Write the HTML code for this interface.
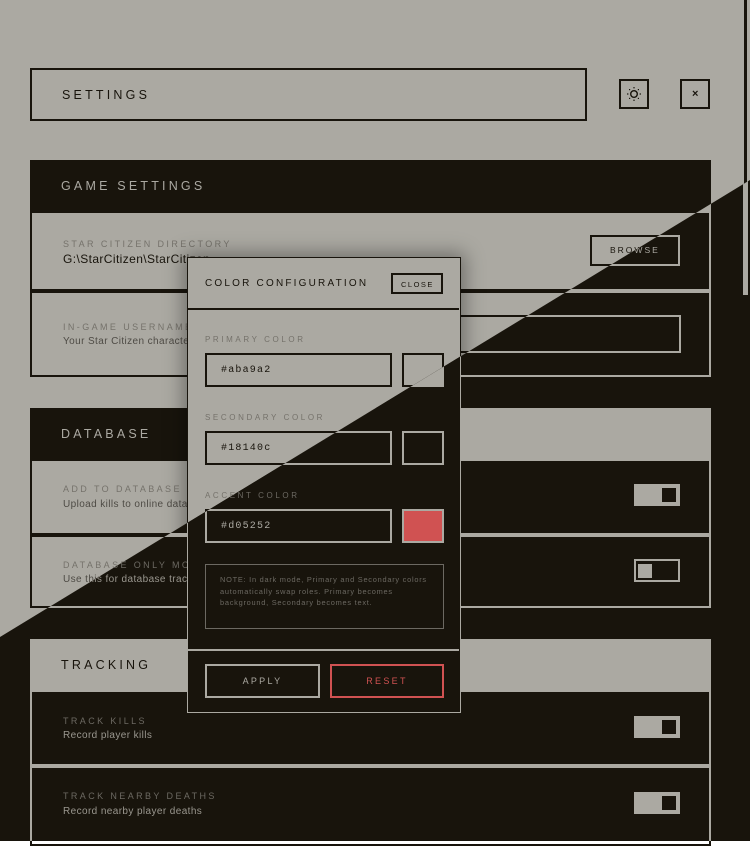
<!DOCTYPE html>
<html><head><meta charset="utf-8"><style>
*{margin:0;padding:0;box-sizing:border-box}
html,body{width:750px;height:841px;overflow:hidden;font-family:"Liberation Sans",Arial,sans-serif}
.layer{position:absolute;left:0;top:0;width:750px;height:841px;background:var(--bg);color:var(--fg)}
.light{--bg:#aba9a2;--fg:#18140c;--mut:#75726b;--desc:#4e4b45}
.dark{--bg:#18140c;--fg:#aba9a2;--mut:#6c6962;--desc:#9a978f;clip-path:polygon(750px 180px,750px 841px,0 841px,0 637px)}
.a{position:absolute}
.box{position:absolute;border:2px solid var(--fg)}
.ttl{font-size:12.5px;letter-spacing:3.2px}
.sh{position:absolute;left:30px;width:681px;height:53px;background:var(--fg);color:var(--bg);padding:19px 0 0 31px}
.row{position:absolute;left:30px;width:681px;border:2px solid var(--fg);border-top:0}
.lab{position:absolute;left:31px;font-size:9px;letter-spacing:2.4px;color:var(--mut)}
.val{position:absolute;left:31px;font-size:12px;letter-spacing:.4px}
.desc{position:absolute;left:31px;font-size:10px;letter-spacing:.4px;color:var(--desc)}
.tog{position:absolute;left:602px;width:46px;height:22px;background:var(--fg);border:1px solid var(--fg)}
.tog i{position:absolute;left:27px;top:3px;width:14px;height:14px;background:var(--bg)}
.toff{position:absolute;left:602px;width:46px;height:23px;border:2px solid var(--fg)}
.toff i{position:absolute;left:2px;top:3px;width:14px;height:14px;background:var(--fg)}
.modal{position:absolute;left:187px;top:257px;width:274px;height:456px;background:var(--bg);border:1.5px solid var(--fg)}
.light .modal{box-shadow:0 0 18px 4px rgba(0,0,0,.35)}
.ml{position:absolute;left:17px;font-size:8px;letter-spacing:2.6px;color:var(--mut)}
.inp{position:absolute;left:17px;width:187px;height:34px;border:2px solid var(--fg);font-family:"Liberation Mono",monospace;font-size:10px;letter-spacing:1.2px;padding:10px 0 0 14px}
.sw{position:absolute;left:214px;width:42px;height:34px;border:2px solid var(--fg)}
.note{position:absolute;left:17px;top:306px;width:239px;height:65px;border:1.5px solid var(--mut);font-size:7.4px;letter-spacing:.75px;line-height:11.5px;color:var(--mut);padding:9px 12px 0 14px}
</style></head><body>

<!-- LIGHT -->
<div class="layer light">
 <div class="a" style="left:744px;top:0;width:3px;height:295px;background:var(--fg)"></div>
 <div class="box" style="left:30px;top:68px;width:557px;height:53px"><div class="a ttl" style="left:30px;top:18px">SETTINGS</div></div>
 <div class="box" style="left:619px;top:79px;width:30px;height:30px">
  <svg class="a" style="left:5px;top:5px" width="16" height="16" viewBox="0 0 16 16"><circle cx="8" cy="8" r="3.3" fill="none" stroke="currentColor" stroke-width="1.4"/><g fill="currentColor"><rect x="7.4" y="1" width="1.2" height="1.4"/><rect x="7.4" y="13.6" width="1.2" height="1.4"/><rect x="1" y="7.4" width="1.4" height="1.2"/><rect x="13.6" y="7.4" width="1.4" height="1.2"/><rect x="3" y="3" width="1.2" height="1.2"/><rect x="11.8" y="3" width="1.2" height="1.2"/><rect x="3" y="11.8" width="1.2" height="1.2"/><rect x="11.8" y="11.8" width="1.2" height="1.2"/></g></svg></div>
 <div class="box" style="left:680px;top:79px;width:30px;height:30px"><div class="a" style="left:10px;top:7px;font-size:11px;font-weight:bold">×</div></div>

 <div class="sh ttl" style="top:160px">GAME SETTINGS</div>
 <div class="row" style="top:213px;height:78px">
  <div class="lab" style="top:26px">STAR CITIZEN DIRECTORY</div>
  <div class="val" style="top:39px">G:\StarCitizen\StarCitizen</div>
  <div class="box" style="left:558px;top:22px;width:90px;height:31px;font-size:8.5px;letter-spacing:2px;padding:8px 0 0 18px">BROWSE</div>
 </div>
 <div class="row" style="top:291px;height:86px;border-top:2px solid var(--fg)">
  <div class="lab" style="top:29px">IN-GAME USERNAME</div>
  <div class="desc" style="top:43px">Your Star Citizen character name</div>
  <div class="box" style="left:363px;top:22px;width:286px;height:38px"></div>
 </div>

 <div class="sh ttl" style="top:408px">DATABASE</div>
 <div class="row" style="top:461px;height:74px">
  <div class="lab" style="top:23px">ADD TO DATABASE</div>
  <div class="desc" style="top:38px">Upload kills to online database</div>
  <div class="tog" style="top:23px"><i></i></div>
 </div>
 <div class="row" style="top:535px;height:73px;border-top:2px solid var(--fg)">
  <div class="lab" style="top:23px">DATABASE ONLY MODE</div>
  <div class="desc" style="top:37px">Use this for database tracking only</div>
  <div class="toff" style="top:22px"><i></i></div>
 </div>

 <div class="sh ttl" style="top:639px">TRACKING</div>
 <div class="row" style="top:692px;height:74px">
  <div class="lab" style="top:24px">TRACK KILLS</div>
  <div class="desc" style="top:38px">Record player kills</div>
  <div class="tog" style="top:24px"><i></i></div>
 </div>
 <div class="row" style="top:766px;height:80px;border-top:2px solid var(--fg)">
  <div class="lab" style="top:23px">TRACK NEARBY DEATHS</div>
  <div class="desc" style="top:38px">Record nearby player deaths</div>
  <div class="tog" style="top:24px"><i></i></div>
 </div>

 <div class="modal">
  <div class="a" style="left:17px;top:20px;font-size:10px;letter-spacing:2.2px">COLOR CONFIGURATION</div>
  <div class="box" style="left:203px;top:15px;width:52px;height:21px;font-size:7.5px;letter-spacing:1.5px;padding:5px 0 0 8px">CLOSE</div>
  <div class="a" style="left:0;top:50px;width:271px;height:1.5px;background:var(--fg)"></div>
  <div class="ml" style="top:77px">PRIMARY COLOR</div>
  <div class="inp" style="top:95px">#aba9a2</div>
  <div class="sw" style="top:95px;background:#aba9a2"></div>
  <div class="ml" style="top:155px">SECONDARY COLOR</div>
  <div class="inp" style="top:173px">#18140c</div>
  <div class="sw" style="top:173px;background:#18140c"></div>
  <div class="ml" style="top:233px">ACCENT COLOR</div>
  <div class="inp" style="top:251px">#d05252</div>
  <div class="sw" style="top:251px;background:#d05252"></div>
  <div class="note">NOTE: In dark mode, Primary and Secondary colors automatically swap roles. Primary becomes background, Secondary becomes text.</div>
  <div class="a" style="left:0;top:391px;width:271px;height:1.5px;background:var(--fg)"></div>
  <div class="box" style="left:17px;top:406px;width:115px;height:34px;font-size:9px;letter-spacing:2.3px;text-align:center;padding-top:10px">APPLY</div>
  <div class="a" style="left:142px;top:406px;width:114px;height:34px;border:2px solid #d05252;color:#d05252;font-size:9px;letter-spacing:2.3px;text-align:center;padding-top:10px">RESET</div>
 </div>
</div>

<!-- DARK -->
<div class="layer dark">
 <div class="a" style="left:743px;top:0;width:5px;height:295px;background:var(--fg)"></div>
 <div class="box" style="left:30px;top:68px;width:557px;height:53px"></div>
 <div class="sh ttl" style="top:160px">GAME SETTINGS</div>
 <div class="row" style="top:213px;height:78px">
  <div class="box" style="left:558px;top:22px;width:90px;height:31px;font-size:8.5px;letter-spacing:2px;padding:8px 0 0 18px">BROWSE</div>
 </div>
 <div class="row" style="top:291px;height:86px;border-top:2px solid var(--fg)">
  <div class="box" style="left:363px;top:22px;width:286px;height:38px"></div>
 </div>

 <div class="sh ttl" style="top:408px">DATABASE</div>
 <div class="row" style="top:461px;height:74px">
  <div class="lab" style="top:23px">ADD TO DATABASE</div>
  <div class="desc" style="top:38px">Upload kills to online database</div>
  <div class="tog" style="top:23px"><i></i></div>
 </div>
 <div class="row" style="top:535px;height:73px;border-top:2px solid var(--fg)">
  <div class="lab" style="top:23px">DATABASE ONLY MODE</div>
  <div class="desc" style="top:37px">Use this for database tracking only</div>
  <div class="toff" style="top:22px"><i></i></div>
 </div>

 <div class="sh ttl" style="top:639px">TRACKING</div>
 <div class="row" style="top:692px;height:74px">
  <div class="lab" style="top:24px">TRACK KILLS</div>
  <div class="desc" style="top:38px">Record player kills</div>
  <div class="tog" style="top:24px"><i></i></div>
 </div>
 <div class="row" style="top:766px;height:80px;border-top:2px solid var(--fg)">
  <div class="lab" style="top:23px">TRACK NEARBY DEATHS</div>
  <div class="desc" style="top:38px">Record nearby player deaths</div>
  <div class="tog" style="top:24px"><i></i></div>
 </div>

 <div class="modal">
  <div class="a" style="left:0;top:50px;width:271px;height:1.5px;background:var(--fg)"></div>
  <div class="ml" style="top:77px">PRIMARY COLOR</div>
  <div class="inp" style="top:95px">#aba9a2</div>
  <div class="sw" style="top:95px;background:#aba9a2"></div>
  <div class="ml" style="top:155px">SECONDARY COLOR</div>
  <div class="inp" style="top:173px">#18140c</div>
  <div class="sw" style="top:173px;background:#18140c"></div>
  <div class="ml" style="top:233px">ACCENT COLOR</div>
  <div class="inp" style="top:251px">#d05252</div>
  <div class="sw" style="top:251px;background:#d05252"></div>
  <div class="note">NOTE: In dark mode, Primary and Secondary colors automatically swap roles. Primary becomes background, Secondary becomes text.</div>
  <div class="a" style="left:0;top:391px;width:271px;height:1.5px;background:var(--fg)"></div>
  <div class="box" style="left:17px;top:406px;width:115px;height:34px;font-size:9px;letter-spacing:2.3px;text-align:center;padding-top:10px">APPLY</div>
  <div class="a" style="left:142px;top:406px;width:114px;height:34px;border:2px solid #d05252;color:#d05252;font-size:9px;letter-spacing:2.3px;text-align:center;padding-top:10px">RESET</div>
 </div>
</div>
</body></html>
